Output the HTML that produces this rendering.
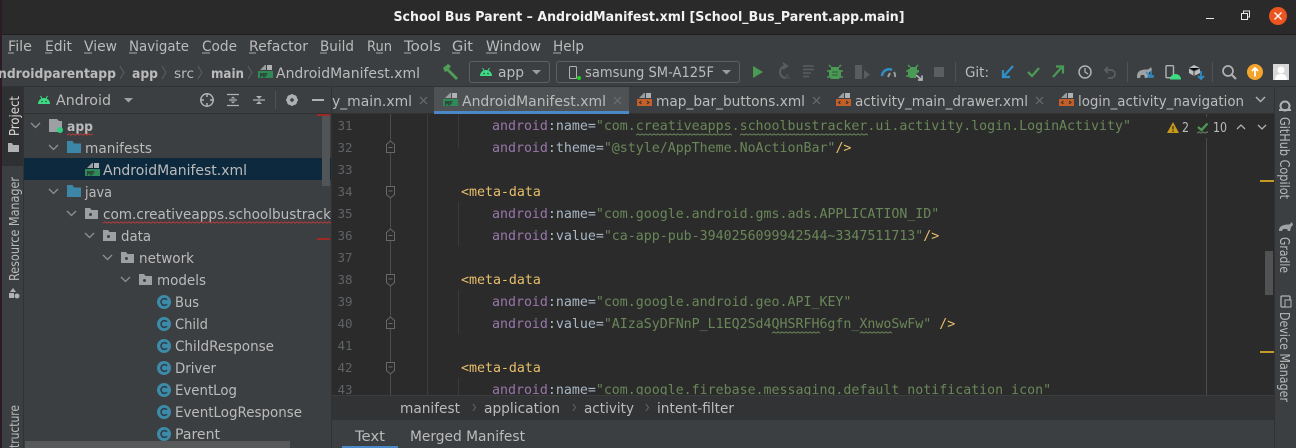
<!DOCTYPE html>
<html><head><meta charset="utf-8"><title>School Bus Parent</title>
<style>
html,body{margin:0;padding:0;width:1296px;height:448px;overflow:hidden;background:#2b2b2b}
svg{display:block}
.u{font-family:"DejaVu Sans","Liberation Sans",sans-serif;font-size:13px;fill:#bbbbbb}
.m{font-size:14px}
.c{font-family:"DejaVu Sans Mono","Liberation Mono",monospace;font-size:13.28px;fill:#a9b7c6}
.n{font-family:"DejaVu Sans Mono","Liberation Mono",monospace;font-size:12.5px;fill:#606366}
.a{fill:#9876aa}.s{fill:#6a8759}.t{fill:#e8bf6a}.w{fill:#a9b7c6}
</style></head><body>
<svg width="1296" height="448" viewBox="0 0 1296 448" xmlns="http://www.w3.org/2000/svg">
<defs>
<pattern id="sr" patternUnits="userSpaceOnUse" width="4" height="3"><path d="M0 2.200L2 .8L4 2.200" stroke="#b83a3a" fill="none"/></pattern>
<pattern id="sg" patternUnits="userSpaceOnUse" width="4" height="3"><path d="M0 2.200L2 .8L4 2.200" stroke="#6a8759" fill="none"/></pattern>
<g id="mf"><path d="M1 5l5-5h1v5z" fill="#9a9c9e"/><rect x="8" y="0" width="5" height="5" fill="#afb1b3"/><rect x="-1" y="6" width="15" height="7" fill="#2f8a58"/><text x="1" y="12.400" font-family="DejaVu Sans Mono,monospace" font-size="6.500" font-weight="bold" fill="#2b2b2b">MF</text></g>
<g id="xm"><path d="M1 5l5-5h1v5z" fill="#9a9c9e"/><rect x="8" y="0" width="5" height="5" fill="#afb1b3"/><rect x="-1" y="6" width="15" height="7" fill="#c3602a"/><path d="M3.500 8l-2 1.500 2 1.500M9 8l2 1.500-2 1.500" stroke="#2b2b2b" fill="none"/></g>
<g id="cl"><circle cx="7" cy="7" r="7" fill="#3d8ba8"/><path d="M10 4.800a3.400 3.400 0 1 0 0 4.400" stroke="#2b3b45" stroke-width="1.500" fill="none"/></g>
<g id="pk"><path d="M0 1h5l1.500 2h6.500v9h-13z" fill="#9da0a2"/><circle cx="5.500" cy="7.500" r="1.500" fill="#3c3f41"/></g>
<g id="fo"><path d="M0 0h5.500l1.500 2.500h7v9.500h-14z" fill="#3c87a8"/></g>
<g id="dr"><path d="M0 0l4.500 4.500 4.500-4.500" stroke="#8e9193" stroke-width="1.300" fill="none"/></g>
<g id="an"><path d="M0 10a6 6 0 0 1 12 0z" fill="#3ddc84"/><path d="M2.500 2l1.500 2.500M9.500 2l-1.500 2.500" stroke="#3ddc84"/><circle cx="4" cy="7.500" r=".8" fill="#3c3f41"/><circle cx="8" cy="7.500" r=".8" fill="#3c3f41"/></g>
<g id="sep"><path d="M0 0l4 6.500-4 6.500" stroke="#5d6062" fill="none"/></g>
<g id="fe"><path d="M0.500 3.500l4-3.500 4 3.500v8h-8z" fill="#2b2b2b" stroke="#66686a"/><path d="M2.500 6.500h4" stroke="#66686a"/></g>
<g id="fs"><path d="M0.500 0.500h8v8l-4 3.500-4-3.500z" fill="#2b2b2b" stroke="#66686a"/><path d="M2.500 5h4" stroke="#66686a"/></g>
</defs>

<rect width="1296" height="448" fill="#2b2b2b"/>
<rect y="0" width="1296" height="35" fill="#2a2a2a"/>
<rect y="34" width="1296" height="1" fill="#1f1f1f"/>
<rect y="35" width="1296" height="51" fill="#3c3f41"/>
<rect y="86" width="1296" height="1" fill="#323232"/>
<rect x="0" y="87" width="331" height="361" fill="#3c3f41"/>
<rect x="0" y="0" width="2" height="448" fill="#2c1a26"/>
<rect x="2" y="87" width="21" height="79" fill="#2f3032"/>
<rect x="23" y="87" width="1" height="361" fill="#323232"/>
<rect x="24" y="113" width="307" height="1" fill="#323232"/>
<rect x="331" y="87" width="1" height="361" fill="#323232"/>

<!-- title -->
<text x="649" y="21" text-anchor="middle" font-family="DejaVu Sans,Liberation Sans,sans-serif" font-weight="bold" font-size="13" fill="#f2f2f2" textLength="511" lengthAdjust="spacingAndGlyphs">School Bus Parent – AndroidManifest.xml [School_Bus_Parent.app.main]</text>
<rect x="1206" y="18" width="8" height="1" fill="#e8e8e8"/>
<path d="M1241.500 13.500h6v6h-6zM1243.500 13v-2h6v6h-2" stroke="#e8e8e8" fill="none"/>
<circle cx="1278" cy="16" r="9" fill="#e9541f"/>
<path d="M1274.500 12.500l7 7M1281.500 12.500l-7 7" stroke="#fff" stroke-width="1.300"/>

<!-- menu -->
<text x="8" y="51" class="u m" textLength="24" lengthAdjust="spacingAndGlyphs">File</text>
<text x="45" y="51" class="u m" textLength="27" lengthAdjust="spacingAndGlyphs">Edit</text>
<text x="84" y="51" class="u m" textLength="33" lengthAdjust="spacingAndGlyphs">View</text>
<text x="129" y="51" class="u m" textLength="60" lengthAdjust="spacingAndGlyphs">Navigate</text>
<text x="202" y="51" class="u m" textLength="35" lengthAdjust="spacingAndGlyphs">Code</text>
<text x="249" y="51" class="u m" textLength="59" lengthAdjust="spacingAndGlyphs">Refactor</text>
<text x="320" y="51" class="u m" textLength="34" lengthAdjust="spacingAndGlyphs">Build</text>
<text x="367" y="51" class="u m" textLength="25" lengthAdjust="spacingAndGlyphs">Run</text>
<text x="404" y="51" class="u m" textLength="37" lengthAdjust="spacingAndGlyphs">Tools</text>
<text x="452" y="51" class="u m" textLength="21" lengthAdjust="spacingAndGlyphs">Git</text>
<text x="486" y="51" class="u m" textLength="55" lengthAdjust="spacingAndGlyphs">Window</text>
<text x="553" y="51" class="u m" textLength="31" lengthAdjust="spacingAndGlyphs">Help</text>
<path d="M8 53h6M45 53h7M84 53h8M129 53h8M202 53h8M249 53h7M320 53h7M376 53h7M404 53h7M452 53h8M486 53h11M553 53h8" stroke="#aaaaaa"/>

<!-- breadcrumb -->
<text x="-2" y="78" class="u" font-weight="bold" textLength="118" lengthAdjust="spacingAndGlyphs">ndroidparentapp</text>
<use href="#sep" x="120" y="66"/>
<text x="132" y="78" class="u" font-weight="bold" textLength="26" lengthAdjust="spacingAndGlyphs">app</text>
<use href="#sep" x="162" y="66"/>
<text x="174" y="78" class="u" textLength="20" lengthAdjust="spacingAndGlyphs">src</text>
<use href="#sep" x="198" y="66"/>
<text x="211" y="78" class="u" font-weight="bold" textLength="33" lengthAdjust="spacingAndGlyphs">main</text>
<use href="#sep" x="248" y="66"/>
<use href="#mf" x="259" y="65"/>
<text x="276" y="78" class="u m" textLength="144" lengthAdjust="spacingAndGlyphs">AndroidManifest.xml</text>

<!-- toolbar -->
<path d="M443 68l5-4 3 2-2 3 9 9-2 2-9-9-2 1z" fill="#4f9d58"/>
<rect x="469.500" y="61.500" width="80" height="21" rx="2.500" fill="none" stroke="#5e6163"/>
<use href="#an" x="480" y="66"/>
<text x="498" y="77" class="u m" textLength="26" lengthAdjust="spacingAndGlyphs">app</text>
<path d="M532 70h9l-4.500 4.500z" fill="#9a9c9e"/>
<rect x="556.500" y="61.500" width="183" height="21" rx="2.500" fill="none" stroke="#5e6163"/>
<rect x="569.500" y="66.500" width="7" height="12" rx="1" fill="none" stroke="#afb1b3"/>
<circle cx="579" cy="78" r="2" fill="#20d020"/>
<text x="585" y="77" class="u m" textLength="129" lengthAdjust="spacingAndGlyphs">samsung SM-A125F</text>
<path d="M722 70h9l-4.500 4.500z" fill="#9a9c9e"/>
<path d="M753 66l10 6-10 6z" fill="#4a9a55"/>
<path d="M786 66a6 6 0 1 0 0 12M783 63l4 3-4 3" stroke="#5a5d5f" stroke-width="2" fill="none"/><text x="785" y="79" font-family="DejaVu Sans,sans-serif" font-size="7" fill="#5a5d5f">A</text>
<path d="M803 66h11M803 69.500h11M803 73h8M803 76.500h6" stroke="#5a5d5f" stroke-width="1.500"/>
<path d="M831 67h8v3h2v6l-2 3h-8l-2-3v-6h2z" fill="#4a9a55"/><path d="M829 65l2 2M841 65l-2 2M827 71h3M840 71h3M827 77h3M840 77h3" stroke="#4a9a55" stroke-width="1.500"/><path d="M832 72h6M832 75h6" stroke="#2f5a38"/>
<path d="M855 65h7v14h-7zM864 70l6 4.500-6 4.500z" fill="#5a5d5f"/>
<path d="M882 76a7 7 0 0 1 10-6" stroke="#2f8fc9" stroke-width="2.500" fill="none"/><path d="M894 72a7 7 0 0 1 1 5M888 77l2-4" stroke="#9a9c9e" stroke-width="2" fill="none"/>
<path d="M910 67h7v3h2v2l-3 2v4h-6l-2-2v-7h2z" fill="#4a9a55"/><path d="M908 65l2 2M918 65l-2 2M906 71h3M906 76h3" stroke="#4a9a55" stroke-width="1.500"/><path d="M916 75l6 5M922 75.500v4.500h-4" stroke="#b0b2b4" stroke-width="1.700" fill="none"/>
<rect x="934" y="67" width="10" height="10" fill="#5c5f61"/>
<rect x="955" y="62" width="1" height="20" fill="#505355"/>
<text x="965" y="77" class="u m" textLength="24" lengthAdjust="spacingAndGlyphs">Git:</text>
<path d="M1013 66l-9 10M1003 70v7h7" stroke="#2f8fc9" stroke-width="2.200" fill="none"/>
<path d="M1028 72l4 4 7-8" stroke="#4a9a55" stroke-width="2.300" fill="none"/>
<path d="M1053 77l9-10M1056 66.500h7v7" stroke="#4a9a55" stroke-width="2.200" fill="none"/>
<circle cx="1085" cy="72" r="6" fill="none" stroke="#afb1b3" stroke-width="1.500"/><path d="M1085 68v4l3 2" stroke="#afb1b3" stroke-width="1.300" fill="none"/>
<path d="M1108 67l-3 3 3 3M1105 70h6a4 4 0 0 1 0 8h-3" stroke="#5c5f61" stroke-width="1.700" fill="none"/>
<rect x="1127" y="62" width="1" height="20" fill="#505355"/>
<path d="M1137 78c0-5 1-7 5-8s5 0 7-1l2-2 1 3c-1 1-2 2-3 2l-1 6h-3l-1-3h-3l-1 3z" fill="#9fa1a3"/><path d="M1151 71v6M1147 77h6v-2M1146 72l5 5" stroke="#2f8fc9" stroke-width="1.500" fill="none"/>
<rect x="1166" y="65.700" width="7.500" height="12" rx="1" fill="none" stroke="#afb1b3" stroke-width="1.400"/>
<path d="M1170 79.500a5.500 5.500 0 0 1 11 0z" fill="#3ddc84"/>
<path d="M1194 65l6 3v5l-6 3-5-3v-5z" fill="#bcbec0"/><path d="M1189 68l5 3 6-3M1194 71v5" stroke="#3c3f41"/>
<path d="M1201 71v8M1198 76l3 3 3-3" stroke="#2f8fc9" stroke-width="1.700" fill="none"/>
<rect x="1212" y="62" width="1" height="20" fill="#505355"/>
<circle cx="1228" cy="71" r="5" fill="none" stroke="#afb1b3" stroke-width="1.700"/><path d="M1232 75l4 4" stroke="#afb1b3" stroke-width="2"/>
<circle cx="1255" cy="72" r="8" fill="#f2a42c"/><path d="M1255 76.500v-8M1252 71l3-3 3 3" stroke="#fff" stroke-width="1.800" fill="none"/>
<rect x="1273" y="64" width="16" height="16" fill="#d8d8d8"/><circle cx="1281" cy="70" r="3.500" fill="#fff"/><path d="M1275 80c0-5 3-6 6-6s6 1 6 6z" fill="#fff"/>

<!-- left stripe -->
<text transform="translate(19 136) rotate(-90)" class="u" style="fill:#d8d8d8" textLength="40" lengthAdjust="spacingAndGlyphs">Project</text>
<path d="M8 143h4l1 2h6v7h-11z" fill="#afb1b3"/>
<text transform="translate(19 281) rotate(-90)" class="u" textLength="104" lengthAdjust="spacingAndGlyphs">Resource Manager</text>
<path d="M13 288l3 4h-6zM9 293h5v5h-5z" fill="#afb1b3"/><circle cx="17" cy="296" r="2.500" fill="#afb1b3"/>
<text transform="translate(19 448) rotate(-90)" class="u" textLength="43" lengthAdjust="spacingAndGlyphs">tructure</text>

<!-- project header -->
<use href="#an" x="38" y="94"/>
<text x="56" y="105" class="u m" textLength="55" lengthAdjust="spacingAndGlyphs">Android</text>
<path d="M124 98h9l-4.500 4.500z" fill="#a0a2a4"/>
<circle cx="207" cy="100" r="6.200" fill="none" stroke="#afb1b3" stroke-width="1.500"/><path d="M207 93v4M207 103v4M200 100h4M210 100h4" stroke="#afb1b3" stroke-width="1.500"/>
<path d="M227 94.500h12M227 105.500h12M229 100h8" stroke="#afb1b3" stroke-width="1.200"/><path d="M233 96.500l-2.500 2h5zM233 103.500l-2.500-2h5z" fill="#afb1b3"/>
<path d="M253 100h12M253 94h12M253 106h12" stroke="#afb1b3" stroke-width="1.200" stroke-dasharray="12 0"/><path d="M259 99l-3-3h6zM259 101l-3 3h6z" fill="#afb1b3"/><rect x="252" y="93" width="14" height="2" fill="#3c3f41"/><rect x="252" y="105" width="14" height="2" fill="#3c3f41"/>
<rect x="275" y="91" width="1" height="18" fill="#505355"/>
<circle cx="292" cy="100" r="4" fill="none" stroke="#afb1b3" stroke-width="3"/><path d="M292 94v12M286 100h12M287.800 95.800l8.400 8.400M296.200 95.800l-8.400 8.400" stroke="#afb1b3" stroke-width="1.500"/><circle cx="292" cy="100" r="1.800" fill="#3c3f41"/>
<rect x="312" y="99" width="12" height="2" fill="#afb1b3"/>

<!-- tree -->
<rect x="24" y="158" width="307" height="22" fill="#0d293e"/>
<rect x="322" y="114" width="8" height="72" fill="#525557"/>
<rect x="317" y="114" width="13" height="2" fill="#9e2927"/>
<rect x="317" y="238" width="13" height="2" fill="#9e2927"/>
<use href="#dr" x="31" y="123"/>
<path d="M49 119h8l2 2h3v11h-13z" fill="#9da0a2"/><circle cx="60" cy="130" r="3" fill="#30d080"/>
<text x="67" y="131" class="u" font-weight="bold" style="font-size:13.500px" textLength="26" lengthAdjust="spacingAndGlyphs">app</text>
<g transform="translate(67 133)"><rect width="26" height="3" fill="url(#sr)"/></g>
<use href="#dr" x="49" y="145"/><use href="#fo" x="67" y="141"/>
<text x="85" y="153" class="u m" textLength="67" lengthAdjust="spacingAndGlyphs">manifests</text>
<use href="#mf" x="86" y="163"/>
<text x="103" y="175" class="u m" textLength="144" lengthAdjust="spacingAndGlyphs">AndroidManifest.xml</text>
<use href="#dr" x="49" y="189"/><use href="#fo" x="67" y="185"/>
<text x="85" y="197" class="u m" textLength="27" lengthAdjust="spacingAndGlyphs">java</text>
<use href="#dr" x="67" y="211"/><use href="#pk" x="85" y="207"/>
<text x="103" y="219" class="u m" textLength="228" lengthAdjust="spacingAndGlyphs">com.creativeapps.schoolbustrack</text>
<g transform="translate(103 221)"><rect width="228" height="3" fill="url(#sr)"/></g>
<use href="#dr" x="85" y="233"/><use href="#pk" x="103" y="229"/>
<text x="121" y="241" class="u m" textLength="30" lengthAdjust="spacingAndGlyphs">data</text>
<use href="#dr" x="103" y="255"/><use href="#pk" x="121" y="251"/>
<text x="139" y="263" class="u m" textLength="55" lengthAdjust="spacingAndGlyphs">network</text>
<use href="#dr" x="121" y="277"/><use href="#pk" x="139" y="273"/>
<text x="157" y="285" class="u m" textLength="49" lengthAdjust="spacingAndGlyphs">models</text>
<use href="#cl" x="157" y="295"/><text x="175" y="307" class="u m" textLength="24" lengthAdjust="spacingAndGlyphs">Bus</text>
<use href="#cl" x="157" y="317"/><text x="175" y="329" class="u m" textLength="33" lengthAdjust="spacingAndGlyphs">Child</text>
<use href="#cl" x="157" y="339"/><text x="175" y="351" class="u m" textLength="99" lengthAdjust="spacingAndGlyphs">ChildResponse</text>
<use href="#cl" x="157" y="361"/><text x="175" y="373" class="u m" textLength="41" lengthAdjust="spacingAndGlyphs">Driver</text>
<use href="#cl" x="157" y="383"/><text x="175" y="395" class="u m" textLength="62" lengthAdjust="spacingAndGlyphs">EventLog</text>
<use href="#cl" x="157" y="405"/><text x="175" y="417" class="u m" textLength="127" lengthAdjust="spacingAndGlyphs">EventLogResponse</text>
<use href="#cl" x="157" y="427"/><text x="175" y="439" class="u m" textLength="45" lengthAdjust="spacingAndGlyphs">Parent</text>
<rect x="25" y="441" width="265" height="7" fill="#57595b"/>

<!-- tabs -->
<rect x="332" y="87" width="943" height="27" fill="#3c3f41"/>
<rect x="332" y="113" width="943" height="1" fill="#323232"/>
<rect x="434" y="87" width="195" height="24" fill="#4e5254"/>
<rect x="434" y="111" width="195" height="3" fill="#4a88c7"/>
<text x="332" y="106" class="u m" textLength="80" lengthAdjust="spacingAndGlyphs">y_main.xml</text>
<path d="M420 97l7 7M427 97l-7 7" stroke="#6e7072"/>
<use href="#mf" x="444" y="93"/>
<text x="462" y="106" class="u m" textLength="144" lengthAdjust="spacingAndGlyphs">AndroidManifest.xml</text>
<path d="M614 97l7 7M621 97l-7 7" stroke="#6e7072"/>
<use href="#xm" x="638" y="93"/>
<text x="656" y="106" class="u m" textLength="149" lengthAdjust="spacingAndGlyphs">map_bar_buttons.xml</text>
<path d="M813 97l7 7M820 97l-7 7" stroke="#6e7072"/>
<use href="#xm" x="837" y="93"/>
<text x="855" y="106" class="u m" textLength="173" lengthAdjust="spacingAndGlyphs">activity_main_drawer.xml</text>
<path d="M1036 97l7 7M1043 97l-7 7" stroke="#6e7072"/>
<use href="#xm" x="1060" y="93"/>
<text x="1078" y="106" class="u m" textLength="166" lengthAdjust="spacingAndGlyphs">login_activity_navigation</text>
<path d="M1256 97l4.500 4.500 4.500-4.500" stroke="#afb1b3" stroke-width="1.500" fill="none"/>

<!-- right stripe -->
<rect x="1275" y="87" width="21" height="361" fill="#3c3f41"/>
<rect x="1274" y="87" width="1" height="361" fill="#323232"/>
<circle cx="1285" cy="106" r="4.500" fill="none" stroke="#afb1b3" stroke-width="2"/><path d="M1279 110h12" stroke="#afb1b3" stroke-width="2"/>
<text transform="translate(1280 117) rotate(90)" class="u" textLength="82" lengthAdjust="spacingAndGlyphs">GitHub Copilot</text>
<path d="M1279 231c0-4 2-5 5-6s5 0 6-1l2-2 1 3c-1 1-2 2-2 2l-1 4h-2l-1-2h-4l-1 2z" fill="#9fa1a3"/>
<text transform="translate(1280 237) rotate(90)" class="u" textLength="36" lengthAdjust="spacingAndGlyphs">Gradle</text>
<rect x="1281" y="296" width="9" height="11" rx="1" fill="none" stroke="#afb1b3" stroke-width="1.300"/><rect x="1285" y="300" width="6" height="7" fill="#3c3f41" stroke="#afb1b3"/>
<text transform="translate(1280 312) rotate(90)" class="u" textLength="90" lengthAdjust="spacingAndGlyphs">Device Manager</text>

<!-- editor -->
<rect x="427" y="114" width="1" height="282" fill="#3a3c3e"/>
<rect x="390" y="114" width="1" height="282" fill="#4a4c4e"/>
<rect x="1206" y="114" width="1" height="3" fill="#4a4c4e"/>
<rect x="1206" y="138" width="1" height="258" fill="#4a4c4e"/>
<rect x="458" y="114" width="1" height="34" fill="#393b3d"/><rect x="458" y="202" width="1" height="44" fill="#393b3d"/><rect x="458" y="290" width="1" height="44" fill="#393b3d"/><rect x="458" y="378" width="1" height="18" fill="#393b3d"/>
<use href="#fe" x="386" y="141"/><use href="#fs" x="386" y="186"/>
<use href="#fe" x="386" y="229"/><use href="#fs" x="386" y="274"/>
<use href="#fe" x="386" y="317"/><use href="#fs" x="386" y="362"/>

<text x="337.500" y="130" class="n">31</text><text x="337.500" y="152" class="n">32</text><text x="337.500" y="174" class="n">33</text><text x="337.500" y="196" class="n">34</text><text x="337.500" y="218" class="n">35</text><text x="337.500" y="240" class="n">36</text><text x="337.500" y="262" class="n">37</text><text x="337.500" y="284" class="n">38</text><text x="337.500" y="306" class="n">39</text><text x="337.500" y="328" class="n">40</text><text x="337.500" y="350" class="n">41</text><text x="337.500" y="372" class="n">42</text><text x="337.500" y="394" class="n">43</text>

<text x="492" y="130" class="c"><tspan class="a">android</tspan><tspan class="w">:name=</tspan><tspan class="s">"com.creativeapps.schoolbustracker.ui.activity.login.LoginActivity"</tspan></text>
<g transform="translate(636 133)"><rect width="96" height="3" fill="url(#sg)"/></g>
<g transform="translate(740 133)"><rect width="128" height="3" fill="url(#sg)"/></g>
<text x="492" y="152" class="c"><tspan class="a">android</tspan><tspan class="w">:theme=</tspan><tspan class="s">"@style/AppTheme.NoActionBar"</tspan><tspan class="t">/&gt;</tspan></text>
<text x="461" y="196" class="c"><tspan class="t">&lt;meta-data</tspan></text>
<text x="492" y="218" class="c"><tspan class="a">android</tspan><tspan class="w">:name=</tspan><tspan class="s">"com.google.android.gms.ads.APPLICATION_ID"</tspan></text>
<text x="492" y="240" class="c"><tspan class="a">android</tspan><tspan class="w">:value=</tspan><tspan class="s">"ca-app-pub-3940256099942544~3347511713"</tspan><tspan class="t">/&gt;</tspan></text>
<text x="461" y="284" class="c"><tspan class="t">&lt;meta-data</tspan></text>
<text x="492" y="306" class="c"><tspan class="a">android</tspan><tspan class="w">:name=</tspan><tspan class="s">"com.google.android.geo.API_KEY"</tspan></text>
<text x="492" y="328" class="c"><tspan class="a">android</tspan><tspan class="w">:value=</tspan><tspan class="s">"AIzaSyDFNnP_L1EQ2Sd4QHSRFH6gfn_XnwoSwFw"</tspan><tspan class="t"> /&gt;</tspan></text>
<g transform="translate(772 331)"><rect width="48" height="3" fill="url(#sg)"/></g>
<g transform="translate(860 331)"><rect width="32" height="3" fill="url(#sg)"/></g>
<text x="461" y="372" class="c"><tspan class="t">&lt;meta-data</tspan></text>
<text x="492" y="394" class="c"><tspan class="a">android</tspan><tspan class="w">:name=</tspan><tspan class="s">"com.google.firebase.messaging.default_notification_icon"</tspan></text>

<!-- inspection widget -->
<path d="M1173 122l6 11h-12z" fill="#c79a1a"/><path d="M1173 126v3.500M1173 130.500v1.500" stroke="#2b2b2b" stroke-width="1.200"/>
<text x="1182" y="132" class="u" textLength="7" lengthAdjust="spacingAndGlyphs">2</text>
<path d="M1198 127l3.500 3 6-6.500" stroke="#4a9a55" stroke-width="2.300" fill="none"/><g transform="translate(1197 131)"><rect width="11" height="3" fill="url(#sg)"/></g>
<text x="1213" y="132" class="u" textLength="14" lengthAdjust="spacingAndGlyphs">10</text>
<path d="M1237 129l4-4 4 4" stroke="#afb1b3" stroke-width="1.300" fill="none"/>
<path d="M1258 125l4 4 4-4" stroke="#afb1b3" stroke-width="1.300" fill="none"/>

<!-- scrollbar and marks -->
<rect x="1265" y="251" width="8" height="44" fill="#505254"/>
<rect x="1260" y="180" width="14" height="2" fill="#c49a20"/>
<rect x="1260" y="351" width="14" height="2" fill="#c49a20"/>

<!-- navigation bar -->
<rect x="332" y="395" width="942" height="25" fill="#313335"/>
<rect x="332" y="395" width="942" height="1" fill="#3a3c3e"/>
<text x="400" y="413" class="u m" textLength="60" lengthAdjust="spacingAndGlyphs">manifest</text>
<path d="M473 404l2.500 3.500-2.500 3.500" stroke="#65686a" fill="none"/>
<text x="484" y="413" class="u m" textLength="76" lengthAdjust="spacingAndGlyphs">application</text>
<path d="M573 404l2.500 3.500-2.500 3.500" stroke="#65686a" fill="none"/>
<text x="584" y="413" class="u m" textLength="50" lengthAdjust="spacingAndGlyphs">activity</text>
<path d="M646 404l2.500 3.500-2.500 3.500" stroke="#65686a" fill="none"/>
<text x="657" y="413" class="u m" textLength="77" lengthAdjust="spacingAndGlyphs">intent-filter</text>

<!-- bottom tabs -->
<rect x="332" y="420" width="942" height="28" fill="#3c3f41"/>
<text x="355" y="441" class="u m" textLength="30" lengthAdjust="spacingAndGlyphs">Text</text>
<text x="410" y="441" class="u m" textLength="115" lengthAdjust="spacingAndGlyphs">Merged Manifest</text>
<rect x="342" y="446" width="56" height="2" fill="#4a88c7"/>
</svg>
</body></html>
